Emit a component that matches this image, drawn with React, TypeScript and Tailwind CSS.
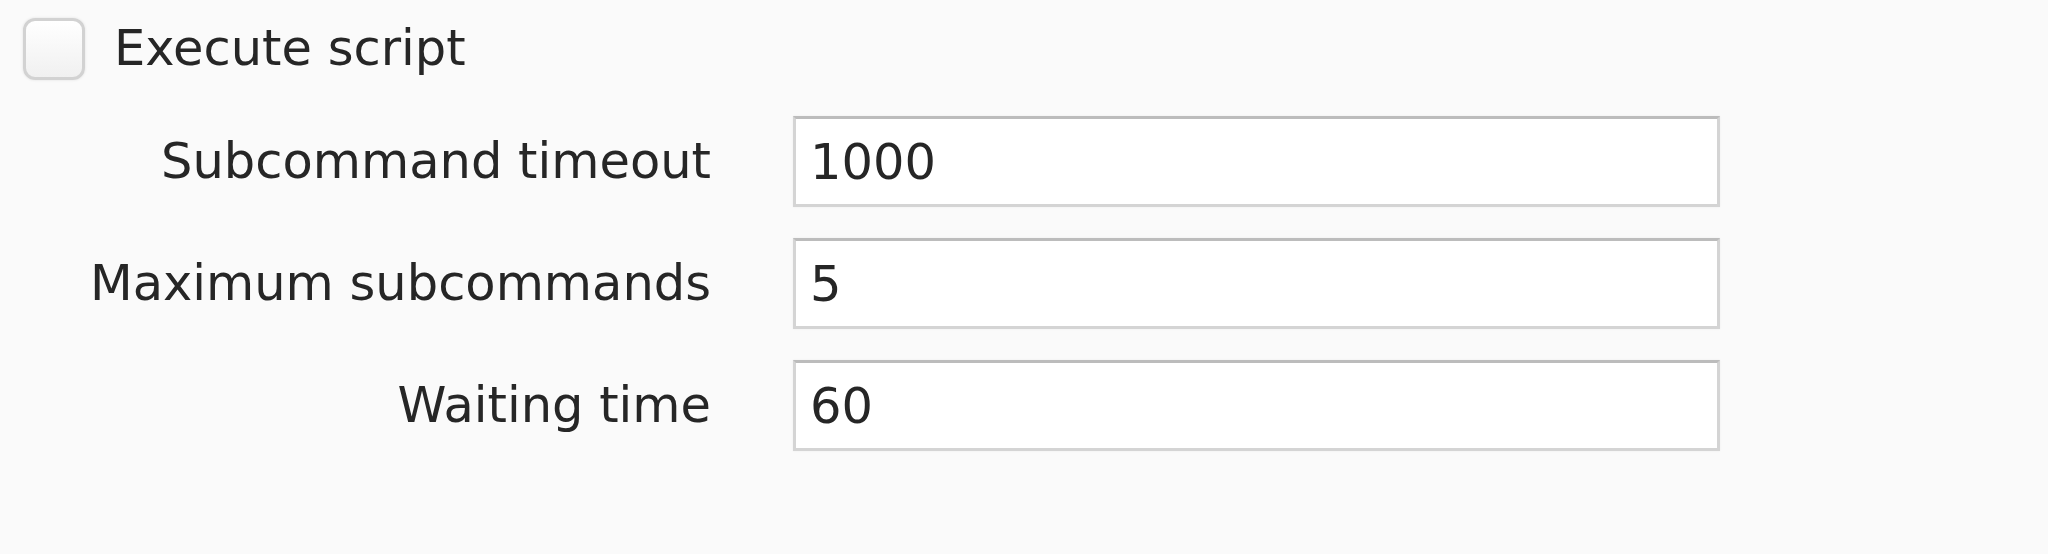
import React, { useState } from 'react';

const fields = [
  { label: 'Subcommand timeout', value: '1000' },
  { label: 'Maximum subcommands', value: '5' },
  { label: 'Waiting time', value: '60' },
];

const App: React.FC = () => {
  const [checked, setChecked] = useState(false);
  const [values, setValues] = useState(fields.map((f) => f.value));

  return (
    <div
      className="w-full h-[554px] bg-[#fafafa] text-[#262626] text-[49.5px] leading-none"
      style={{ fontFamily: '"DejaVu Sans", Verdana, sans-serif' }}
    >
      {/* Checkbox row */}
      <div className="flex items-center pt-[18px] pl-[23px]">
        <button
          onClick={() => setChecked(!checked)}
          className="w-[62px] h-[62px] rounded-[12px] border-[3px] border-[#d2d2d2] bg-gradient-to-b from-white to-[#f0f0f0] shadow-[0_0_3px_rgba(0,0,0,0.1)] flex items-center justify-center"
        >
          {checked && <span className="text-[40px] text-[#333]">✓</span>}
        </button>
        <span className="ml-[29px]">Execute script</span>
      </div>

      {/* Form */}
      <div className="grid grid-cols-[711px_927px] gap-x-[82px] gap-y-[31px] mt-[36px] items-center">
        {fields.map((f, i) => (
          <React.Fragment key={f.label}>
            <label className="text-right whitespace-nowrap">{f.label}</label>
            <input
              type="text"
              value={values[i]}
              onChange={(e) => {
                const next = [...values];
                next[i] = e.target.value;
                setValues(next);
              }}
              className="h-[91px] w-full bg-white border-[3px] border-[#d4d4d4] border-t-[#bcbcbc] pl-[14px] text-[49.5px] text-[#262626] outline-none shadow-[0_0_2px_rgba(0,0,0,0.06)]"
              style={{ fontFamily: '"DejaVu Sans", Verdana, sans-serif' }}
            />
          </React.Fragment>
        ))}
      </div>
    </div>
  );
};

export default App;
